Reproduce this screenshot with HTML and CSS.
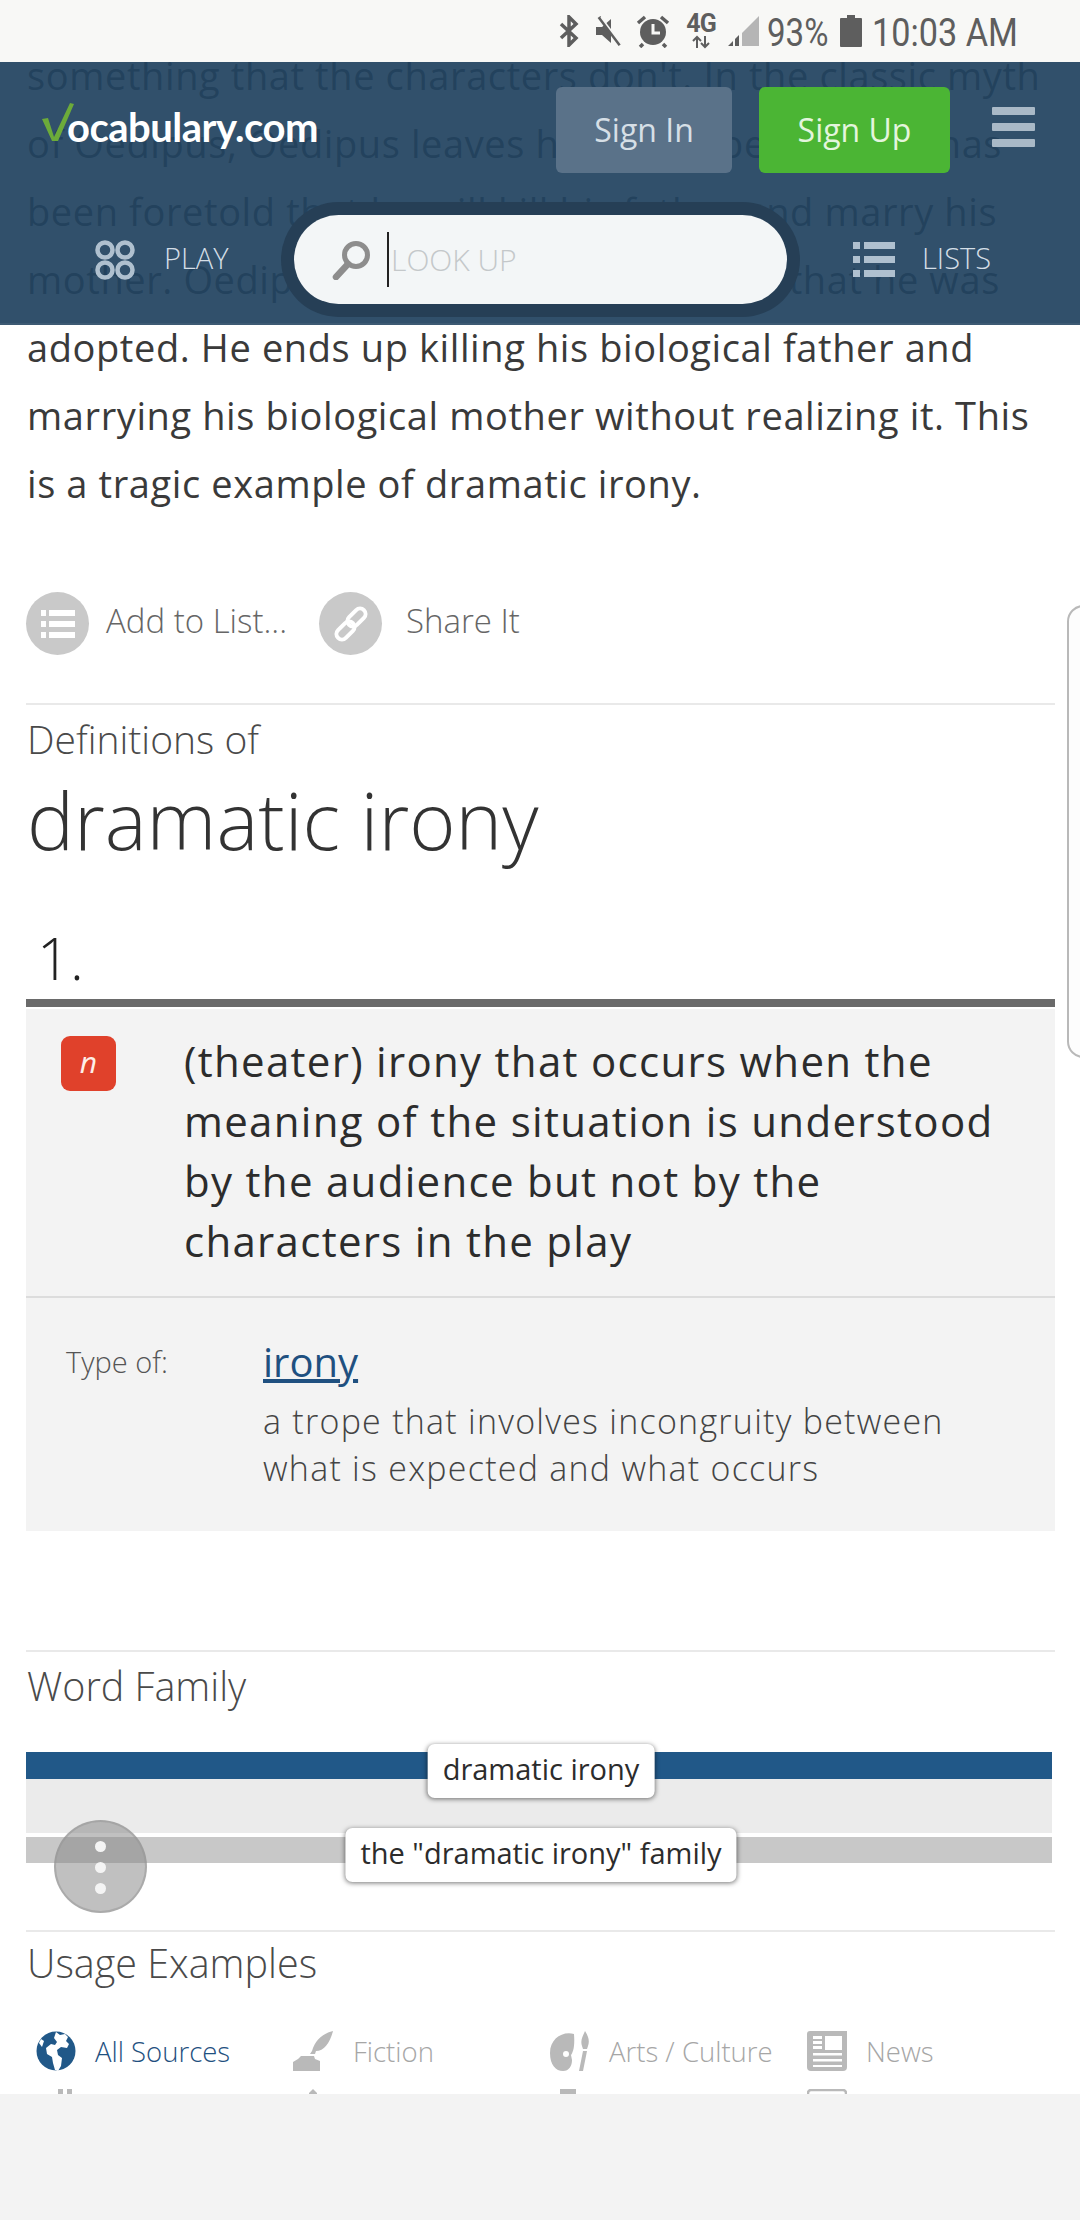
FILE: index.html
```html
<!DOCTYPE html>
<html lang="en">
<head>
  <meta charset="UTF-8" />
  <meta name="viewport" content="width=device-width, initial-scale=1.0"/>
  <title>dramatic irony - Vocabulary.com</title>
  <link rel="stylesheet" href="styles.css">
</head>
<body>

  <div class="status-bar">
    <svg class="st-icon" width="22" height="32" viewBox="0 0 22 32"><path d="M3 9l15 14-7 7V2l7 7L3 23" fill="none" stroke="#5e5e5e" stroke-width="3.5"/></svg>
    <svg class="st-icon" width="28" height="32" viewBox="0 0 28 32"><path d="M2 12h6l9-8v24l-9-8H2z" fill="#5e5e5e"/><path d="M5 2l21 28" stroke="#5e5e5e" stroke-width="3.5"/><path d="M7 2l21 28" stroke="#f8f8f6" stroke-width="1.5"/></svg>
    <svg class="st-icon" width="34" height="34" viewBox="0 0 34 34"><circle cx="17" cy="18" r="13" fill="#5e5e5e"/><path d="M17 10v9h7" fill="none" stroke="#f8f8f6" stroke-width="3"/><path d="M2 9l7-6M32 9l-7-6M7 30l-3 3M27 30l3 3" stroke="#5e5e5e" stroke-width="3.5"/></svg>
    <span class="st-net"><b>4G</b><svg width="18" height="14" viewBox="0 0 18 14"><path d="M5 13V3M1 6l4-4 4 4M13 1v10M9 8l4 4 4-4" fill="none" stroke="#5e5e5e" stroke-width="2"/></svg></span>
    <svg class="st-icon" width="31" height="32" viewBox="0 0 31 32"><path d="M31 1v30H14V18z" fill="#b5b5b5"/><path d="M0 31l5-5v5zM7 31v-7l4-4v11z" fill="#5e5e5e"/></svg>
    <span class="st-text st-pct">93%</span>
    <svg class="st-icon" width="22" height="32" viewBox="0 0 22 32"><path d="M7 0h8v3h6a1 1 0 0 1 1 1v27a1 1 0 0 1-1 1H1a1 1 0 0 1-1-1V4a1 1 0 0 1 1-1h6z" fill="#5e5e5e"/></svg>
    <span class="st-text st-time">10:03 AM</span>
  </div>

  <main class="screen">
    <p class="intro">something that the characters don't. In the classic myth of Oedipus, Oedipus leaves his family because he has been foretold that he will kill his father and marry his mother. Oedipus doesn't know, however, that he was adopted. He ends up killing his biological father and marrying his biological mother without realizing it. This is a tragic example of dramatic irony.</p>

    <div class="actions">
      <span class="round-icon">
        <svg width="34" height="30" viewBox="0 0 34 30"><path d="M0 1h5v6H0zM8 1h26v6H8zM0 12h5v6H0zM8 12h26v6H8zM0 23h5v6H0zM8 23h26v6H8z" fill="#fff"/></svg>
      </span>
      <span class="action-label add-label">Add to List...</span>
      <span class="round-icon">
        <svg width="36" height="36" viewBox="0 0 36 36"><g fill="none" stroke="#fff" stroke-width="4"><rect x="18" y="1" width="11" height="21" rx="5.500" transform="rotate(45 23.500 11.500)"/><rect x="7" y="14" width="11" height="21" rx="5.500" transform="rotate(45 12.500 24.500)"/></g></svg>
      </span>
      <span class="action-label">Share It</span>
    </div>

    <section class="section">
      <div class="def-kicker">Definitions of</div>
      <h1 class="word">dramatic irony</h1>
      <div class="sense-num">1.</div>
      <div class="sense-box">
        <div class="sense-def">
          <span class="pos">n</span>
          <p class="def-text">(theater) irony that occurs when the meaning of the situation is understood by the audience but not by the characters in the play</p>
        </div>
        <div class="sense-type">
          <span class="type-label">Type of:</span>
          <div>
            <a class="type-link">irony</a>
            <p class="type-desc">a trope that involves incongruity between what is expected and what occurs</p>
          </div>
        </div>
      </div>
    </section>

    <section class="section family-section">
      <h2 class="sec-title">Word Family</h2>
      <div class="family">
        <div class="bar bar-blue"></div>
        <div class="bar bar-light"></div>
        <div class="bar bar-gray"></div>
        <span class="fam-label fam-word">dramatic irony</span>
        <span class="fam-label fam-all">the "dramatic irony" family</span>
      </div>
    </section>

    <section class="section usage-section">
      <h2 class="sec-title">Usage Examples</h2>
      <div class="tabs">
        <div class="tab active">
          <svg width="40" height="40" viewBox="0 0 40 40"><circle cx="20" cy="20" r="19.5" fill="#215888"/><path d="M20 1l4 3 5-1 3 3-2 4 3 3-2 4-6-1-4 3 1 5 4 3-1 8-3 5-3-1-2-7-1-6-5-3-1-6 5-4 4 1 2-3-3-4z" fill="#fff"/><path d="M3 12l2-4 3 2-2 6z" fill="#fff"/></svg>
          <span>All Sources</span>
        </div>
        <div class="tab">
          <svg width="41" height="40" viewBox="0 0 41 40"><path d="M40 0c-12 3-18 10-21 20l-2 3h5l1-3c8 0 14-8 17-20zM8 25h13l1 3 5 2v10H0v-9l5-3z" fill="#b9b9b9"/></svg>
          <span>Fiction</span>
        </div>
        <div class="tab">
          <svg width="40" height="40" viewBox="0 0 40 40"><path d="M24 3C12 0 0 8 0 22c0 12 6 18 13 18 6 0 9-5 9-11l-1-5c2-3 4-8 3-21zM16 20a3 3 0 1 1 0 6 3 3 0 0 1 0-6z" fill="#b9b9b9"/><path d="M35 0c3 5 5 9 3 15l-1 3h-4l-1-3c-2-6 1-10 3-15zM33 20h4l-4 20h-4z" fill="#b9b9b9"/></svg>
          <span>Arts / Culture</span>
        </div>
        <div class="tab">
          <svg width="40" height="40" viewBox="0 0 40 40"><path d="M3 0h37v36a4 4 0 0 1-4 4H4a4 4 0 0 1-4-4V3a3 3 0 0 1 3-3z" fill="#b9b9b9"/><path d="M6 5h9v3H6zM6 10h9v3H6zM6 15h9v3H6zM18 5h17v14H18zM6 22h29v2.500H6zM6 28h29v2.500H6zM6 34h29v2H6z" fill="#fff"/></svg>
          <span>News</span>
        </div>
        <div class="tab"><svg width="40" height="40" viewBox="0 0 40 40"><path d="M22 0h5v40h-5zM31 0h5v40h-5z" fill="#b9b9b9"/></svg></div>
        <div class="tab"><svg width="40" height="40" viewBox="0 0 40 40"><path d="M20 0l4 4v36h-8V4z" fill="#b9b9b9"/></svg></div>
        <div class="tab"><svg width="40" height="40" viewBox="0 0 40 40"><path d="M10 0h16v6H10z" fill="#b9b9b9"/></svg></div>
        <div class="tab"><svg width="40" height="40" viewBox="0 0 40 40"><rect x="1" y="1" width="38" height="38" rx="3" fill="none" stroke="#b9b9b9" stroke-width="2.500"/></svg></div>
      </div>
    </section>

    <header class="top-nav">
      <div class="nav-row">
        <div class="logo">
          <svg width="32" height="40" viewBox="0 0 32 40"><path d="M0 16l6-1 6 19L28 0l4 1-16 37h-6z" fill="#6cab3a"/></svg>
          <span>ocabulary.com</span>
        </div>
        <a class="btn btn-in">Sign In</a>
        <a class="btn btn-up">Sign Up</a>
        <div class="burger"><i></i><i></i><i></i></div>
      </div>
      <div class="search-row">
        <div class="nav-link play-link">
          <svg width="40" height="40" viewBox="0 0 40 40"><g fill="none" stroke="#afc0cf" stroke-width="4.500"><circle cx="10" cy="10" r="7.500"/><circle cx="30" cy="10" r="7.500"/><circle cx="10" cy="30" r="7.500"/><circle cx="30" cy="30" r="7.500"/></g></svg>
          <span>PLAY</span>
        </div>
        <div class="search-wrap">
          <div class="search">
            <svg width="40" height="40" viewBox="0 0 40 40"><circle cx="25" cy="15" r="11.500" fill="none" stroke="#8d8d8d" stroke-width="5"/><path d="M17 24L5 37" stroke="#8d8d8d" stroke-width="6.500" stroke-linecap="round"/></svg>
            <span class="caret"></span>
            <span class="placeholder">LOOK UP</span>
          </div>
        </div>
        <div class="nav-link lists-link">
          <svg width="42" height="36" viewBox="0 0 42 36"><path d="M0 0h7v7H0zM11 0h31v7H11zM0 14h7v7H0zM11 14h31v7H11zM0 28h7v7H0zM11 28h31v7H11z" fill="#afc0cf"/></svg>
          <span>LISTS</span>
        </div>
      </div>
    </header>

    <div class="fab"><i></i><i></i><i></i></div>
    <div class="edge-handle"></div>
  </main>

  <div class="bottom-bar"></div>

</body>
</html>
```

FILE: styles.css
```css
* {
  box-sizing: border-box;
  margin: 0;
  padding: 0;
}

body {
  width: 1080px;
  height: 2220px;
  display: flex;
  flex-direction: column;
  overflow: hidden;
  background: #fff;
  font-family: 'Open Sans', sans-serif;
  color: #333;
}

/* status bar */
.status-bar {
  height: 62px;
  flex: none;
  display: flex;
  align-items: center;
  padding-left: 558px;
  background: #f8f8f6;
}

.st-icon {
  flex: none;
}

.status-bar > * {
  margin-right: 14px;
}

.st-net {
  width: 38px;
  height: 36px;
  display: flex;
  flex-direction: column;
  align-items: center;
  color: #5e5e5e;
  margin-right: 8px;
  margin-left: -2px;
}

.st-net b {
  font: bold 25px/22px Roboto, sans-serif;
  letter-spacing: -1px;
}

.st-text {
  padding-top: 4px;
  font: 38px/44px Roboto, sans-serif;
  color: #5e5e5e;
  transform-origin: left center;
  white-space: nowrap;
}

.st-pct {
  width: 61px;
  margin-left: -6px;
  margin-right: 12px;
  transform: scaleX(.87);
}

.st-time {
  margin-left: -4px;
  transform: scaleX(.9);
}

/* page */
.screen {
  position: relative;
  height: 2032px;
  flex: none;
  overflow: hidden;
  padding: 0 25px 0 26px;
}

.intro {
  margin: -21px 0 0 1px;
  width: 1030px;
  font-size: 38px;
  letter-spacing: 0.6px;
  line-height: 68px;
  color: #3a3a3a;
}

.actions {
  margin-top: 75px;
  height: 63px;
  display: flex;
  align-items: center;
}

.round-icon {
  width: 63px;
  height: 63px;
  flex: none;
  border-radius: 50%;
  background: #c9c9c9;
  display: flex;
  align-items: center;
  justify-content: center;
}

.action-label {
  margin: -7px 0 0 24px;
  font-size: 33px;
  font-weight: 300;
  color: #666;
}

.add-label {
  margin-left: 17px;
  margin-right: 32px;
}

.section {
  margin-top: 48px;
  border-top: 2px solid #e9e9e9;
}

.def-kicker {
  margin: 10px 0 0 1px;
  font-size: 39px;
  font-weight: 300;
  line-height: 48px;
  color: #4a4a4a;
}

.word {
  margin: 7px 0 0 1px;
  font-size: 79px;
  font-weight: 300;
  line-height: 100px;
  color: #333;
}

.sense-num {
  margin: 53px 0 0 11px;
  font-size: 58px;
  font-weight: 300;
  line-height: 70px;
  color: #222;
}

.sense-box {
  margin-top: 6px;
  padding-top: 2px;
  border-top: 8px solid #6a6a6a;
  background: linear-gradient(#fff 2px, #f3f3f3 2px);
}

.sense-def {
  display: flex;
  padding: 22px 40px 25px 35px;
  border-bottom: 2px solid #dcdcdc;
}

.pos {
  width: 55px;
  height: 55px;
  flex: none;
  margin: 5px 68px 0 0;
  border-radius: 9px;
  background: #e0412b;
  color: #fdeee8;
  font-size: 30px;
  font-style: italic;
  line-height: 52px;
  text-align: center;
}

.def-text {
  font-size: 42px;
  letter-spacing: 1.3px;
  line-height: 60px;
  color: #2c2c2c;
}

.sense-type {
  display: flex;
  padding: 39px 40px 39px 40px;
}

.type-label {
  width: 197px;
  flex: none;
  font-size: 29px;
  font-weight: 300;
  line-height: 50px;
  color: #555;
}

.type-link {
  display: block;
  font-size: 40px;
  line-height: 50px;
  color: #1f5080;
  text-decoration: underline;
}

.type-desc {
  margin-top: 11px;
  font-size: 34px;
  letter-spacing: 1.25px;
  font-weight: 300;
  line-height: 47px;
  color: #444;
}

.sec-title {
  margin-left: 1px;
  font-size: 39.500px;
  font-weight: 300;
  line-height: 50px;
  color: #4a4a4a;
}

.family-section {
  margin-top: 119px;
  padding-top: 9px;
}

.family {
  position: relative;
  margin-top: 41px;
  width: 1026px;
}

.bar-blue {
  height: 27px;
  background: #215888;
}

.bar-light {
  height: 54px;
  background: #ebebeb;
}

.bar-gray {
  height: 26px;
  margin-top: 4px;
  background: #c8c8c8;
}

.fam-label {
  position: absolute;
  left: 515px;
  transform: translateX(-50%);
  height: 54px;
  padding: 0 15px;
  background: #fff;
  border-radius: 7px;
  box-shadow: 0 1px 5px rgba(0,0,0,0.55);
  font-size: 29px;
  line-height: 50px;
  white-space: nowrap;
  color: #2c2c2c;
}

.fam-word {
  top: -8px;
}

.fam-all {
  top: 76px;
}

.usage-section {
  margin-top: 67px;
  padding-top: 6px;
}

.tabs {
  margin: 43px 0 0 10px;
  display: grid;
  grid-template-columns: repeat(4, 257px);
  row-gap: 18px;
}

.tab {
  height: 40px;
  display: flex;
  align-items: center;
  gap: 19px;
  font-size: 27.500px;
  font-weight: 300;
  color: #a6a6a6;
}

.tab.active {
  color: #1f5080;
}

/* fixed nav lying over the text */
.top-nav {
  position: absolute;
  top: 0;
  left: 0;
  width: 1080px;
  height: 263px;
  background: rgba(33, 67, 96, 0.93);
  border-bottom: 2px solid #3d5a73;
}

.nav-row {
  height: 111px;
  padding: 25px 0 0 42px;
  display: flex;
}

.logo {
  width: 514px;
  height: 86px;
  display: flex;
  align-items: center;
  font-family: Lato, sans-serif;
  font-size: 40px;
  font-weight: 700;
  color: #fff;
}

.logo svg {
  margin: -14px -7px 0 0;
}

.logo span {
  margin-top: -6px;
  letter-spacing: -0.5px;
}

.btn {
  height: 86px;
  border-radius: 6px;
  font-size: 32px;
  line-height: 86px;
  text-align: center;
}

.btn-in {
  width: 176px;
  background: #5a7289;
  color: #d6dfe6;
}

.btn-up {
  width: 191px;
  margin-left: 27px;
  background: #4bb534;
  color: #e4f5dd;
}

.burger {
  margin: 20px 0 0 42px;
  width: 43px;
}

.burger i {
  display: block;
  height: 8px;
  margin-bottom: 8px;
  border-radius: 1px;
  background: #a9b9c7;
}

.search-row {
  display: flex;
  align-items: center;
  height: 115px;
  margin-top: 29px;
}

.nav-link {
  display: flex;
  align-items: center;
  font-size: 29px;
  font-weight: 300;
  color: #d4dee6;
}

.nav-link span {
  margin-top: -4px;
}

.play-link {
  width: 281px;
  padding-left: 95px;
  gap: 29px;
}

.lists-link {
  margin-left: 53px;
  gap: 27px;
}

.search-wrap {
  width: 519px;
  height: 115px;
  padding: 13px;
  border-radius: 58px;
  background: #263f56;
}

.search {
  height: 89px;
  display: flex;
  align-items: center;
  padding-left: 37px;
  border-radius: 45px;
  background: #f3f6f7;
}

.caret {
  width: 2px;
  height: 55px;
  margin: 0 2px 0 16px;
  background: #222;
}

.placeholder {
  font-size: 30px;
  font-weight: 300;
  color: #c4c8ca;
}

.fab {
  position: absolute;
  left: 54px;
  top: 1758px;
  width: 93px;
  height: 93px;
  padding-top: 19px;
  border-radius: 50%;
  background: rgba(130, 130, 130, 0.5);
  border: 2px solid rgba(150, 150, 150, 0.5);
}

.fab i {
  display: block;
  width: 11px;
  height: 11px;
  margin: 0 auto 10px;
  border-radius: 50%;
  background: #f4f4f4;
}

.edge-handle {
  position: absolute;
  top: 543px;
  right: -20px;
  width: 33px;
  height: 453px;
  border: 2px solid #b9b9b9;
  border-radius: 18px;
  background: #fdfdfd;
}

.bottom-bar {
  flex: 1;
  background: #f3f3f3;
}
```
